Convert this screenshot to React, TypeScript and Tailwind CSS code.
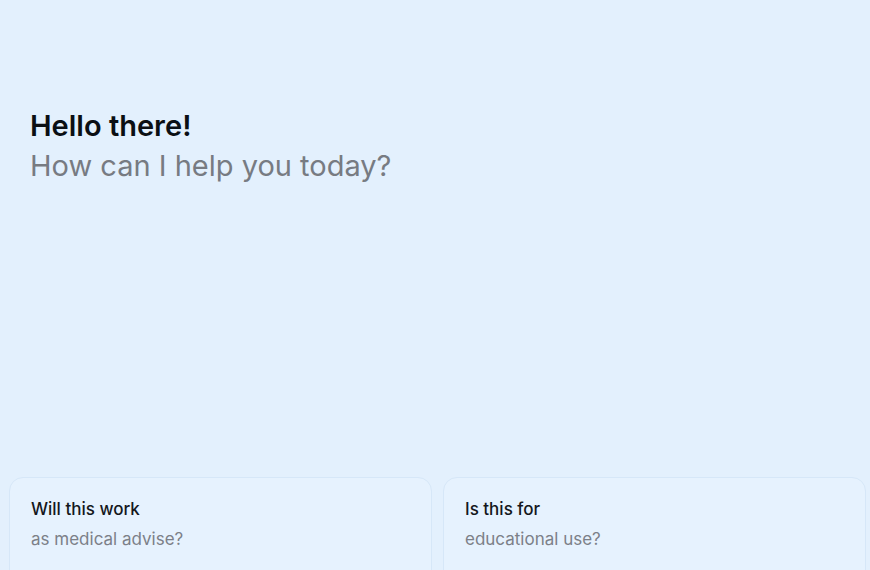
const suggestions = [
  { title: "Will this work", sub: "as medical advise?" },
  { title: "Is this for", sub: "educational use?" },
];

export default function App() {
  return (
    <div
      className="h-[570px] w-[870px] overflow-hidden bg-[#e3f0fd] flex flex-col"
      style={{ fontFamily: "Inter, 'Noto Sans', sans-serif" }}
    >
      <div className="px-[30px] pt-[106px] flex-1">
        <h1 className="text-[29px] font-semibold leading-[40px] text-[#0b0f14]">
          Hello there!
        </h1>
        <p className="text-[29px] leading-[40px] text-[#777b82]">
          How can I help you today?
        </p>
      </div>
      <div className="grid grid-cols-2 gap-[11px] pl-[9px] pr-[4px] h-[93px]">
        {suggestions.map((s) => (
          <div
            key={s.title}
            className="rounded-[14px] border border-[#d6e7f8] bg-[#e6f2fe] px-[21px] pt-[20px] h-[110px]"
          >
            <div className="text-[17px] font-medium leading-[22px] text-[#14171c]">{s.title}</div>
            <div className="mt-[8px] text-[17px] leading-[22px] text-[#7c8088]">{s.sub}</div>
          </div>
        ))}
      </div>
    </div>
  );
}
